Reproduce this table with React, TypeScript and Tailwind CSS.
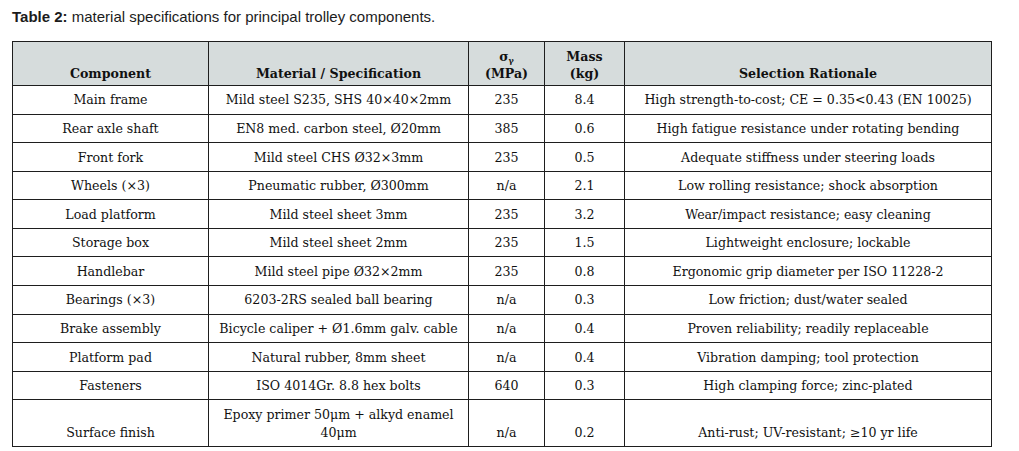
const rows: [string, string, string, string, string][] = [
  ['Main frame', 'Mild steel S235, SHS 40×40×2mm', '235', '8.4', 'High strength-to-cost; CE = 0.35<0.43 (EN 10025)'],
  ['Rear axle shaft', 'EN8 med. carbon steel, Ø20mm', '385', '0.6', 'High fatigue resistance under rotating bending'],
  ['Front fork', 'Mild steel CHS Ø32×3mm', '235', '0.5', 'Adequate stiffness under steering loads'],
  ['Wheels (×3)', 'Pneumatic rubber, Ø300mm', 'n/a', '2.1', 'Low rolling resistance; shock absorption'],
  ['Load platform', 'Mild steel sheet 3mm', '235', '3.2', 'Wear/impact resistance; easy cleaning'],
  ['Storage box', 'Mild steel sheet 2mm', '235', '1.5', 'Lightweight enclosure; lockable'],
  ['Handlebar', 'Mild steel pipe Ø32×2mm', '235', '0.8', 'Ergonomic grip diameter per ISO 11228-2'],
  ['Bearings (×3)', '6203-2RS sealed ball bearing', 'n/a', '0.3', 'Low friction; dust/water sealed'],
  ['Brake assembly', 'Bicycle caliper + Ø1.6mm galv. cable', 'n/a', '0.4', 'Proven reliability; readily replaceable'],
  ['Platform pad', 'Natural rubber, 8mm sheet', 'n/a', '0.4', 'Vibration damping; tool protection'],
  ['Fasteners', 'ISO 4014Gr. 8.8 hex bolts', '640', '0.3', 'High clamping force; zinc-plated'],
  ['Surface finish', 'Epoxy primer 50μm + alkyd enamel 40μm', 'n/a', '0.2', 'Anti-rust; UV-resistant; ≥10 yr life'],
];

const th = 'border border-[#1e1e1e] bg-[#d6dcdc] align-bottom text-center font-bold px-2 pt-[6px] pb-[3px] leading-[17px]';
const td = 'border border-[#1e1e1e] align-bottom text-center px-2 pt-[5.4px] pb-[4.2px] leading-[18px]';

export default function App() {
  return (
    <div className="w-[1019px] h-[451px] bg-white overflow-hidden pl-[12px] pt-[8px]">
      <p className="font-['Liberation_Sans',Arial,sans-serif] text-[15px] leading-[17px] text-[#1c1c1c]">
        <span className="font-bold">Table 2:</span> material specifications for principal trolley components.
      </p>
      <table className="mt-[16px] w-[979px] table-fixed border-collapse font-['DejaVu_Serif',serif] text-[12.6px] text-[#111]">
        <colgroup>
          <col className="w-[196px]" />
          <col className="w-[260px]" />
          <col className="w-[76px]" />
          <col className="w-[80px]" />
          <col className="w-[367px]" />
        </colgroup>
        <thead>
          <tr>
            <th className={th}>Component</th>
            <th className={th}>Material / Specification</th>
            <th className={th}>
              σ<sub className="text-[8px] align-baseline relative top-[2px]">γ</sub>
              <br />
              (MPa)
            </th>
            <th className={th}>
              Mass
              <br />
              (kg)
            </th>
            <th className={th}>Selection Rationale</th>
          </tr>
        </thead>
        <tbody>
          {rows.map((r) => (
            <tr key={r[0]}>
              {r.map((c, i) => (
                <td key={i} className={td}>
                  {c}
                </td>
              ))}
            </tr>
          ))}
        </tbody>
      </table>
    </div>
  );
}
